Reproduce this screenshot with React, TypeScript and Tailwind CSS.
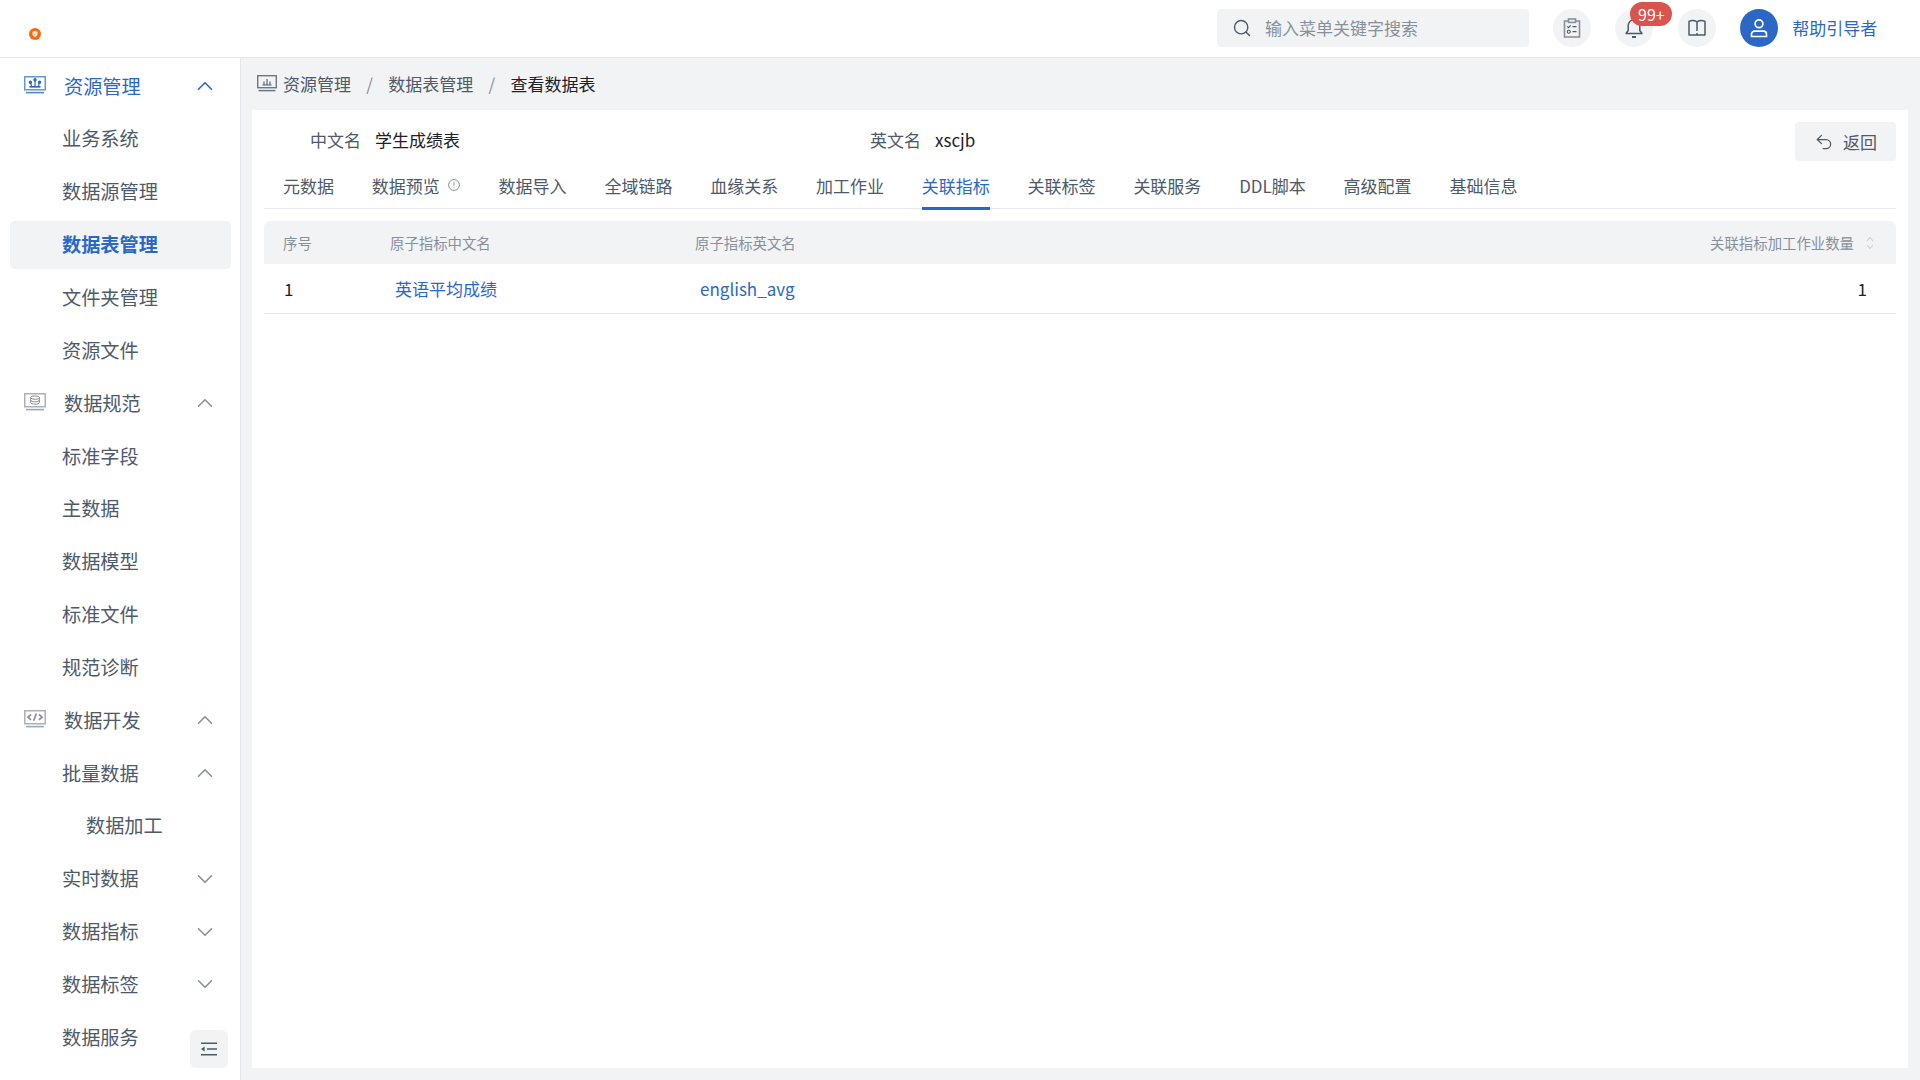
import { ChevronDown, ChevronUp, Search, Undo2 } from "lucide-react";

const FONT = "font-['Noto_Sans_CJK_SC','Noto_Sans',sans-serif]";

const MonitorIcon = ({ kind, className }: { kind: "crown" | "db" | "code"; className: string }) => (
  <svg viewBox="0 0 22 18" width="22" height="18" className={className} fill="none" stroke="currentColor">
    <rect x="0.75" y="0.75" width="20.5" height="13" strokeWidth="1.5" opacity="0.7" />
    <path d="M2 16.6h18" strokeWidth="1.6" opacity="0.8" />
    {kind === "crown" && (
      <g strokeWidth="1.2">
        <path d="M5.5 10.8h11" strokeWidth="1.7" />
        <path d="M11 4v6M6.600 6.400 7.500 10M15.400 6.400 14.500 10" />
        <circle cx="11" cy="3.800" r="1.100" fill="currentColor" />
        <circle cx="6.400" cy="6.200" r="1.100" fill="currentColor" />
        <circle cx="15.600" cy="6.200" r="1.100" fill="currentColor" />
      </g>
    )}
    {kind === "db" && (
      <g strokeWidth="1">
        <ellipse cx="11" cy="4.6" rx="4.4" ry="1.7" />
        <path d="M6.6 4.6v4.8c0 1 2 1.8 4.4 1.8s4.4-.8 4.4-1.8V4.6M6.6 7c0 1 2 1.8 4.4 1.8s4.4-.8 4.4-1.8" />
      </g>
    )}
    {kind === "code" && (
      <g strokeWidth="1.7">
        <path d="M7 4.5 4 7.2l3 2.7M15 4.5l3 2.7-3 2.7M12.4 3.6l-2.8 7.2" />
      </g>
    )}
  </svg>
);

type MenuItem = {
  label: string;
  level: 0 | 1 | 2;
  icon?: "crown" | "db" | "code";
  chevron?: "up" | "down";
  state?: "open" | "active";
};

const menu: MenuItem[] = [
  { label: "资源管理", level: 0, icon: "crown", chevron: "up", state: "open" },
  { label: "业务系统", level: 1 },
  { label: "数据源管理", level: 1 },
  { label: "数据表管理", level: 1, state: "active" },
  { label: "文件夹管理", level: 1 },
  { label: "资源文件", level: 1 },
  { label: "数据规范", level: 0, icon: "db", chevron: "up" },
  { label: "标准字段", level: 1 },
  { label: "主数据", level: 1 },
  { label: "数据模型", level: 1 },
  { label: "标准文件", level: 1 },
  { label: "规范诊断", level: 1 },
  { label: "数据开发", level: 0, icon: "code", chevron: "up" },
  { label: "批量数据", level: 1, chevron: "up" },
  { label: "数据加工", level: 2 },
  { label: "实时数据", level: 1, chevron: "down" },
  { label: "数据指标", level: 1, chevron: "down" },
  { label: "数据标签", level: 1, chevron: "down" },
  { label: "数据服务", level: 1 },
];

const tabs = ["元数据", "数据预览", "数据导入", "全域链路", "血缘关系", "加工作业", "关联指标", "关联标签", "关联服务", "DDL脚本", "高级配置", "基础信息"];

const Sidebar = () => (
  <aside className="relative w-[241px] shrink-0 overflow-hidden bg-white border-r border-[#e5e6eb] pt-[4px] pl-[10px] pr-[9px]">
    <div className="flex flex-col gap-[4.850px]">
      {menu.map((item) => {
        const open = item.state === "open";
        const active = item.state === "active";
        return (
          <div
            key={item.label}
            className={`flex h-[48px] shrink-0 items-center rounded-[5px] pr-[13px] text-[19.200px] ${
              active ? "bg-[#f2f3f5] font-bold text-[#2b68c5]" : open ? "text-[#2b68c5]" : "text-[#4e5969]"
            }`}
          >
            {item.level === 0 && item.icon && (
              <MonitorIcon
                kind={item.icon}
                className={`ml-[14px] mr-[18px] mb-[2px] ${open ? "text-[#2b68c5]" : "text-[#86909c]"}`}
              />
            )}
            {item.level === 1 && <span className="w-[52px]" />}
            {item.level === 2 && <span className="w-[76px]" />}
            <span>{item.label}</span>
            {item.chevron === "up" && (
              <ChevronUp size={26} strokeWidth={1.500} className={`ml-auto ${open ? "text-[#2b68c5]" : "text-[#86909c]"}`} />
            )}
            {item.chevron === "down" && <ChevronDown size={26} strokeWidth={1.500} className="ml-auto text-[#86909c]" />}
          </div>
        );
      })}
    </div>
    <button className="absolute bottom-[12px] left-[190px] flex h-[38px] w-[38px] items-center justify-center rounded-[6px] bg-[#f2f3f5]">
      <svg viewBox="0 0 18 14" width="18" height="14" fill="none" stroke="#4e5969" strokeWidth="1.600" className="mb-[1px]">
        <path d="M1 1.200h16M7 7h10M1 12.800h16" />
        <path d="M4.600 4.600 1 7l3.600 2.400z" fill="#4e5969" stroke="none" />
      </svg>
    </button>
  </aside>
);

const CircleBtn = ({ children }: { children: React.ReactNode }) => (
  <div className="relative flex h-[38px] w-[38px] items-center justify-center rounded-full bg-[#f2f3f5]">{children}</div>
);

const Header = () => (
  <header className="flex h-[58px] shrink-0 items-start border-b border-[#e5e6eb] bg-white pt-[9px]">
    <svg viewBox="0 0 12 12" width="12" height="12" className="ml-[29px] mt-[19px]">
      <circle cx="6" cy="6" r="6" fill="#f76a0c" />
      <path d="M6 2.800 8.600 3.700v2c0 1.600-1.100 2.700-2.600 3.400-1.500-.7-2.600-1.800-2.600-3.400v-2z" fill="#ffe7d6" />
      <path d="m4.700 5.800 1 1 1.600-1.700" fill="none" stroke="#f7a468" strokeWidth="0.800" />
    </svg>
    <div className="ml-[1176px] flex h-[38px] w-[312px] items-center rounded-[4px] bg-[#f2f3f5] pl-[15px]">
      <Search size={20} strokeWidth={1.700} className="text-[#4e5969]" />
      <span className="ml-[13px] text-[17px] text-[#86909c]">输入菜单关键字搜索</span>
    </div>
    <div className="ml-[24px] flex items-center gap-[24.400px]">
      <CircleBtn>
        <svg viewBox="0 0 18 20" width="18" height="20" fill="none" stroke="#86909c" strokeWidth="1.600">
          <rect x="1.500" y="3" width="15" height="16" />
          <rect x="5.500" y="1" width="7" height="3.400" fill="#f2f3f5" />
          <path d="m4.300 8.400 1.300 1.300 2-2.300M9.500 8.600h4M9.500 13.600h4" stroke="#4e5969" strokeWidth="1.100" />
          <circle cx="5.800" cy="13.700" r="1.500" stroke="#4e5969" strokeWidth="1.100" />
        </svg>
      </CircleBtn>
      <CircleBtn>
        <svg viewBox="0 0 20 22" width="20" height="22" fill="none" stroke="#4e5969" strokeWidth="1.500">
          <path d="M2 16.500h16l-2.200-3V8.600A5.800 5.800 0 0 0 4.200 8.600v4.900z" strokeLinejoin="round" />
          <path d="M8 20h4" strokeWidth="2" />
        </svg>
        <span className="absolute left-[15px] top-[-7px] flex h-[24px] w-[42px] items-center justify-center rounded-full bg-[#d9534f] text-[16px] leading-none text-white">
          99+
        </span>
      </CircleBtn>
      <CircleBtn>
        <svg viewBox="0 0 18 18" width="18" height="18" fill="none" stroke="#4e5969" strokeWidth="1.500">
          <path d="M1 2.400C3.500 1.200 6.500 1.200 9 2.800c2.500-1.600 5.500-1.600 8-.4V16H1zM9 2.800v9.200" strokeLinejoin="round" />
          <path d="M9 14v2" strokeWidth="1.500" />
        </svg>
      </CircleBtn>
      <div className="flex h-[38px] w-[38px] items-center justify-center rounded-full bg-[#2b68c5]">
        <svg viewBox="0 0 20 20" width="20" height="20" fill="none" stroke="#ffffff" strokeWidth="1.700">
          <circle cx="10" cy="5.800" r="3.900" />
          <path d="M2.500 18.500v-2.300c0-1.700 1.400-3.100 3.100-3.100h8.800c1.700 0 3.100 1.400 3.100 3.100v2.300z" strokeLinejoin="round" />
        </svg>
      </div>
    </div>
    <span className="ml-[14px] mt-[6px] text-[17px] text-[#2b68c5]">帮助引导者</span>
  </header>
);

const Breadcrumb = () => (
  <div className="flex h-[52px] shrink-0 items-center pl-[5px] text-[17px] text-[#4e5969]">
    <svg viewBox="0 0 20 17" width="20" height="17" fill="none" stroke="#6b7785" className="mr-[6px] mb-[2px]">
      <rect x="0.700" y="0.700" width="18.600" height="12" strokeWidth="1.400" />
      <path d="M1.500 15.600h17" strokeWidth="1.500" />
      <path d="M5.500 10h9M10 4v6M7 6.500V10M13 6.500V10" stroke="#4e5969" strokeWidth="1.100" />
    </svg>
    <span>资源管理</span>
    <span className="mx-[15.300px] text-[#86909c]">/</span>
    <span>数据表管理</span>
    <span className="mx-[15.300px] text-[#86909c]">/</span>
    <span className="text-[#1d2129]">查看数据表</span>
  </div>
);

const Card = () => (
  <div className="flex-1 bg-white px-[12px]">
    <div className="flex h-[54px] items-center pt-[6px] text-[17px]">
      <span className="ml-[46px] text-[#4e5969]">中文名</span>
      <span className="ml-[14px] text-[#1d2129]">学生成绩表</span>
      <span className="ml-[410px] text-[#4e5969]">英文名</span>
      <span className="ml-[14px] text-[#1d2129]">xscjb</span>
      <button className="ml-auto mt-[3px] flex h-[39px] w-[101px] items-center justify-center gap-[9px] rounded-[4px] bg-[#f2f3f5] text-[#4e5969]">
        <Undo2 size={20} strokeWidth={1.500} />
        <span>返回</span>
      </button>
    </div>
    <div className="flex h-[45px] gap-[37.800px] border-b border-[#e5e6eb] pl-[19px] text-[17px]">
      {tabs.map((tab) => {
        const active = tab === "关联指标";
        return (
          <div
            key={tab}
            className={`relative flex h-[45px] items-center pb-[2px] ${active ? "text-[#2b68c5]" : "text-[#4e5969]"}`}
          >
            {tab}
            {tab === "数据预览" && (
              <svg viewBox="0 0 12 12" width="12" height="12" fill="none" stroke="#86909c" className="ml-[8px] mr-[1px] mb-[2px]">
                <circle cx="6" cy="6" r="5.400" strokeWidth="1" />
                <path d="M6 2.800v3.900M6 8.200v1" strokeWidth="1" />
              </svg>
            )}
            {active && <span className="absolute bottom-[-1px] left-0 h-[3px] w-full bg-[#2b68c5]" />}
          </div>
        );
      })}
    </div>
    <div className="mt-[12px] flex h-[43px] items-center rounded-t-[6px] bg-[#f2f3f5] pl-[19px] pr-[22px] text-[14.400px] text-[#86909c]">
      <span className="w-[107px]">序号</span>
      <span className="w-[305px]">原子指标中文名</span>
      <span>原子指标英文名</span>
      <span className="ml-auto">关联指标加工作业数量</span>
      <svg viewBox="0 0 8 14" width="8" height="14" fill="none" stroke="#c9cdd4" strokeWidth="1.100" className="ml-[12px]">
        <path d="m1 5 3-3.500L7 5M1 9l3 3.500L7 9" />
      </svg>
    </div>
    <div className="flex h-[50px] items-center border-b border-[#e5e6eb] pl-[20px] pr-[29px] text-[17px]">
      <span className="w-[111px] text-[#1d2129]">1</span>
      <span className="w-[305px] text-[#2b68c5]">英语平均成绩</span>
      <span className="text-[#2b68c5]">english_avg</span>
      <span className="ml-auto text-[#1d2129]">1</span>
    </div>
  </div>
);

export default function App() {
  return (
    <div className={`flex h-[1080px] w-[1920px] flex-col overflow-hidden bg-[#f2f3f5] ${FONT}`}>
      <Header />
      <div className="flex min-h-0 flex-1">
        <Sidebar />
        <main className="flex min-w-0 flex-1 flex-col pl-[11px] pr-[12px] pb-[12px]">
          <Breadcrumb />
          <Card />
        </main>
      </div>
    </div>
  );
}
